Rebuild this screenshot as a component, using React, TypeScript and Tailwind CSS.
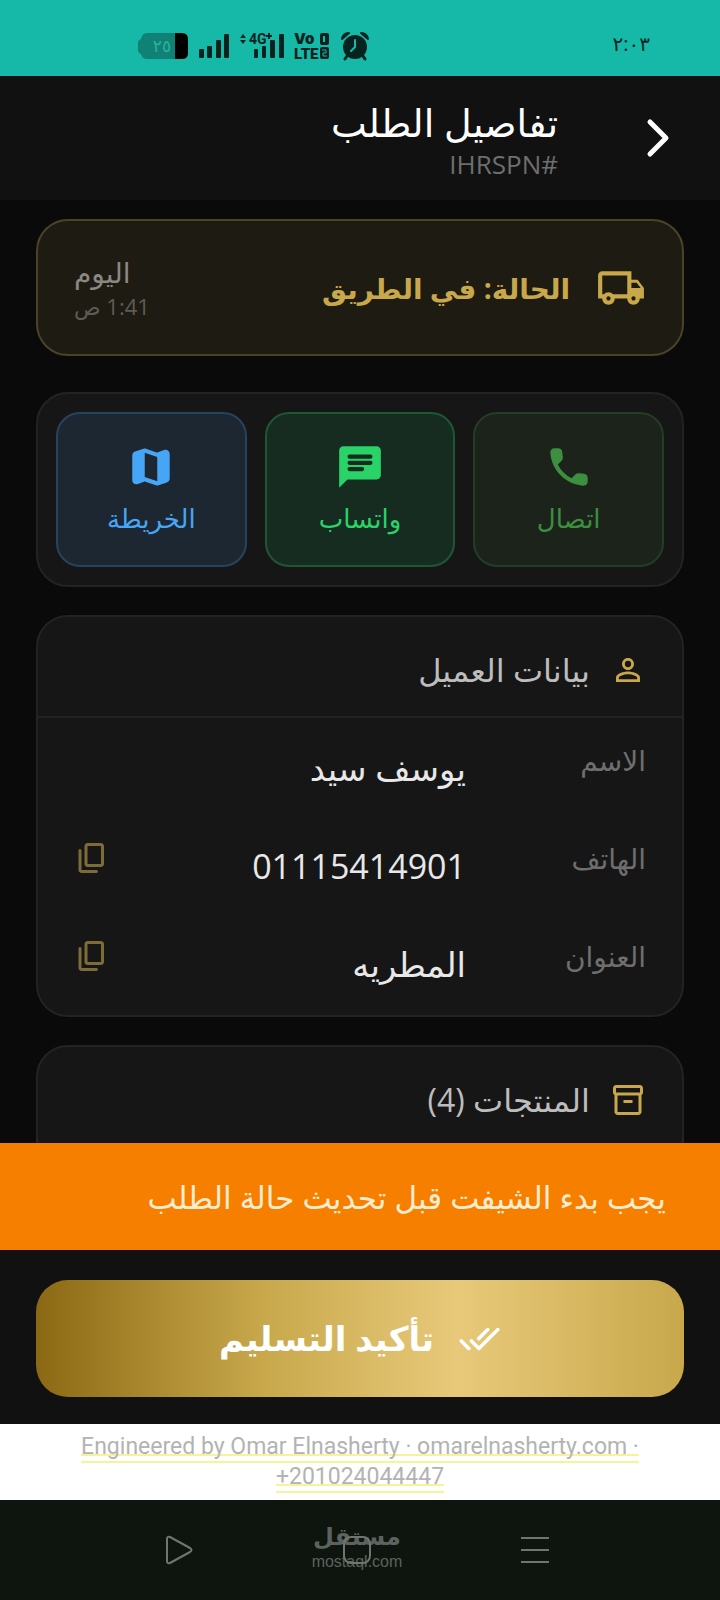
import type { ReactNode } from "react";
import { MdOutlineInventory2, MdOutlineLocalShipping, MdPersonOutline } from "react-icons/md";

const ROWS: Array<{ label: string; value: string; copyable: boolean }> = [
  { label: "الاسم", value: "يوسف سيد", copyable: false },
  { label: "الهاتف", value: "01115414901", copyable: true },
  { label: "العنوان", value: "المطريه", copyable: true },
];

const ACTIONS: Array<{ label: string; className: string; path: string }> = [
  {
    label: "اتصال",
    className: "border-[#243d25] bg-[#1b231b] text-[#3b8f3f]",
    path: "M19.23 15.26l-2.54-.29a1.99 1.99 0 0 0-1.64.57l-1.84 1.84a15.045 15.045 0 0 1-6.59-6.59l1.85-1.85c.43-.43.64-1.03.57-1.64l-.29-2.52a2.001 2.001 0 0 0-1.99-1.77H5.03c-1.13 0-2.07.94-2 2.07.53 8.54 7.36 15.36 15.89 15.89 1.13.07 2.07-.87 2.07-2v-1.73c.01-1.01-.75-1.86-1.76-1.98z",
  },
  {
    label: "واتساب",
    className: "border-[#1f5733] bg-[#172c20] text-[#29d368]",
    path: "M20 2H4c-1.1 0-1.99.9-1.99 2L2 22l4-4h14c1.1 0 2-.9 2-2V4c0-1.1-.9-2-2-2zM7 9h10c.55 0 1 .45 1 1s-.45 1-1 1H7c-.55 0-1-.45-1-1s.45-1 1-1zm6 5H7c-.55 0-1-.45-1-1s.45-1 1-1h6c.55 0 1 .45 1 1s-.45 1-1 1zm4-6H7c-.55 0-1-.45-1-1s.45-1 1-1h10c.55 0 1 .45 1 1s-.45 1-1 1z",
  },
  {
    label: "الخريطة",
    className: "border-[#26435f] bg-[#1c2731] text-[#47a5f5]",
    path: "M14.65 4.98l-5-1.75c-.42-.15-.88-.15-1.3-.01L4.36 4.56C3.55 4.84 3 5.6 3 6.46v11.85c0 1.41 1.41 2.37 2.72 1.86l2.93-1.14c.22-.09.47-.09.69-.01l5 1.75c.42.15.88.15 1.3.01l3.99-1.34c.81-.27 1.36-1.04 1.36-1.9V5.69c0-1.41-1.41-2.37-2.72-1.86l-2.93 1.14c-.22.08-.46.09-.69.01zM15 18.89l-6-2.11V5.11l6 2.11v11.67z",
  },
];

function StatusBar() {
  return (
    <div dir="ltr" className="flex h-[76px] shrink-0 items-end justify-between bg-[#16b9a8] pr-[70px] pb-3 pl-[138px] text-[#06231f]">
      <div className="flex items-center gap-2.5">
        <svg width="51" height="28" viewBox="0 0 51 28">
          <path d="M9 1h29v26H9q-5 0-6-5-3-1-3-4v-7q0-3 3-4 1-6 6-6z" fill="#108275" />
          <path d="M37 1h7q6 0 6 6v14q0 6-6 6h-7z" fill="#000" />
          <text x="24" y="20" textAnchor="middle" fontSize="17" fontFamily="DejaVu Sans" fill="#2bb3a3">
            ٢٥
          </text>
        </svg>
        <svg width="31" height="28" viewBox="0 0 31 28" fill="currentColor">
          <rect x="0" y="17" width="5" height="9" rx="1" />
          <rect x="8" y="14" width="5" height="12" rx="1" />
          <rect x="17" y="8" width="5" height="18" rx="1" />
          <rect x="25" y="2" width="5" height="24" rx="1" />
        </svg>
        <svg width="44" height="36" viewBox="0 -4 44 36" fill="currentColor">
          <path d="M0 6l3-4 3 4zM0 8h6l-3 4z" />
          <text x="9" y="12" fontSize="14" fontWeight="700" fontFamily="Roboto">
            4G
          </text>
          <path d="M28 1h2v2h2v2h-2v2h-2V5h-2V3h2z" />
          <rect x="14" y="17" width="4" height="9" rx="1" />
          <rect x="22" y="14" width="4" height="12" rx="1" />
          <rect x="30" y="8" width="5" height="18" rx="1" />
          <rect x="39" y="2" width="5" height="24" rx="1" />
        </svg>
        <svg width="36" height="36" viewBox="0 -4 36 36" fill="currentColor">
          <text x="0" y="12" fontSize="15" fontWeight="900" fontFamily="Inter">
            Vo
          </text>
          <text x="0" y="27" fontSize="15" fontWeight="900" fontFamily="Roboto">
            LTE
          </text>
          <rect x="26" y="1" width="9" height="12" rx="2" />
          <rect x="26" y="15" width="9" height="12" rx="2" />
          <path d="M30 4v6" stroke="#16b9a8" strokeWidth="2" />
          <path d="M28 18h4v3h-3v3h4" stroke="#16b9a8" strokeWidth="1" fill="none" />
        </svg>
        <svg width="30" height="30" viewBox="0 0 30 30" fill="currentColor">
          <circle cx="15" cy="16" r="12" />
          <path d="M2 8q1-6 7-6zM28 8q-1-6-7-6z" stroke="currentColor" strokeWidth="2" strokeLinejoin="round" />
          <path d="M7 25l-2 3M23 25l2 3" stroke="currentColor" strokeWidth="3" strokeLinecap="round" />
          <path d="M15 9v7l-4 4" stroke="#16b9a8" strokeWidth="2" fill="none" strokeLinecap="round" />
        </svg>
      </div>
      <span dir="rtl" className="text-xl leading-10">٢:٠٣</span>
    </div>
  );
}

function Card({ children }: { children: ReactNode }) {
  return <section className="rounded-[32px] border-2 border-[#232323] bg-[#161616]">{children}</section>;
}

function CardHeader({ icon, title }: { icon: ReactNode; title: string }) {
  return (
    <div className="flex h-[101px] items-center gap-5 border-b-2 border-[#232323] px-9 pt-1.5 text-[#c8a84b]">
      {icon}
      <h2 className="text-[32px] leading-10 text-[#bdbdbd]">{title}</h2>
    </div>
  );
}

function CopyIcon() {
  return (
    <svg width="36" height="36" viewBox="0 0 24 24" fill="currentColor">
      <path d="M9 18q-.825 0-1.412-.587T7 16V4q0-.825.588-1.412T9 2h9q.825 0 1.413.588T20 4v12q0 .825-.587 1.413T18 18zm0-2h9V4H9zm-4 6q-.825 0-1.412-.587T3 20V7q0-.425.288-.712T4 6t.713.288T5 7v13h10q.425 0 .713.288T16 21t-.288.713T15 22z" />
    </svg>
  );
}

function NavBar() {
  return (
    <nav dir="ltr" className="flex h-[100px] shrink-0 items-center justify-between bg-[#0d150e] pr-[170px] pl-[164px] text-[#6f756f]">
      <button aria-label="Back">
        <svg width="30" height="30" viewBox="0 0 30 30" fill="none" stroke="currentColor" strokeWidth="2" strokeLinejoin="round">
          <path d="M3 4q0-3 3-2l20 11q3 2 0 4L6 28q-3 1-3-2z" />
        </svg>
      </button>
      <div className="relative flex flex-col items-center pb-2 text-[#5c625d]">
        <span className="text-2xl leading-8 font-bold">مستقل</span>
        <span className="font-['Liberation_Sans',sans-serif] text-base leading-5">mostaql.com</span>
        <button aria-label="Home" className="absolute top-4 left-1/2 size-7 -translate-x-1/2 rounded-lg border-2 border-[#6f756f]" />
      </div>
      <button aria-label="Menu">
        <svg width="30" height="30" viewBox="0 0 30 30" fill="none" stroke="currentColor" strokeWidth="2">
          <path d="M1 3h28M1 15h28M1 27h28" />
        </svg>
      </button>
    </nav>
  );
}

export default function App() {
  return (
    <div dir="rtl" lang="ar" className="flex h-screen flex-col bg-[#0a0a0a] font-['Open_Sans','DejaVu_Sans',sans-serif]">
      <StatusBar />

      <header className="flex h-[124px] shrink-0 items-center gap-[84px] bg-[#111111] px-[46px]">
        <button aria-label="رجوع" className="text-white">
          <svg width="32" height="48" viewBox="0 0 32 48" fill="none" stroke="currentColor" strokeWidth="5" strokeLinecap="round" strokeLinejoin="round">
            <path d="M8 8l16 16L8 40" />
          </svg>
        </button>
        <div>
          <h1 className="text-[38px] leading-[52px] text-white">تفاصيل الطلب</h1>
          <p className="text-[26px] leading-8 text-[#6e6e6e]">#IHRSPN</p>
        </div>
      </header>

      <main className="min-h-0 flex-1 overflow-hidden px-9 pt-[19px]">
        <section className="flex h-[137px] items-center rounded-[32px] border-2 border-[#4b4228] bg-[#1e1b13] px-9 text-[#c8a84b]">
          <MdOutlineLocalShipping size={50} />
          <h2 className="mr-[26px] flex-1 text-[28px] leading-10 font-bold">الحالة: في الطريق</h2>
          <div className="text-left">
            <p className="text-[28px] leading-9 text-[#8a8881]">اليوم</p>
            <p className="text-[22px] leading-8 text-[#5d5b55]">1:41 ص</p>
          </div>
        </section>

        <div className="mt-9">
          <Card>
            <div className="grid grid-cols-3 gap-[18px] p-[18px]">
              {ACTIONS.map((a) => (
                <button
                  key={a.label}
                  className={`flex h-[155px] flex-col items-center justify-center gap-1.5 rounded-3xl border-2 ${a.className}`}
                >
                  <svg width="50" height="50" viewBox="0 0 24 24" fill="currentColor">
                    <path d={a.path} />
                  </svg>
                  <span className="text-[26px] leading-10">{a.label}</span>
                </button>
              ))}
            </div>
          </Card>
        </div>

        <div className="mt-7 flex flex-col gap-7">
          <Card>
            <CardHeader icon={<MdPersonOutline size={36} />} title="بيانات العميل" />
            <dl className="pb-[3px]">
              {ROWS.map((r) => (
                <div key={r.label} className="flex h-[98px] items-start px-9 pt-6">
                  <dt className="w-[180px] text-[28px] leading-9 text-[#6e6e6e]">{r.label}</dt>
                  <dd className="flex flex-1 items-start justify-between text-[34px] leading-[52px] text-[#e8e8e8]">
                    {r.value}
                    {r.copyable && (
                      <button aria-label={`نسخ ${r.label}`} className="text-[#7d6c38]">
                        <CopyIcon />
                      </button>
                    )}
                  </dd>
                </div>
              ))}
            </dl>
          </Card>
          <Card>
            <CardHeader icon={<MdOutlineInventory2 size={36} />} title="المنتجات (4)" />
            <div className="h-24" />
          </Card>
        </div>
      </main>

      <div role="alert" className="flex h-[107px] shrink-0 items-center bg-[#f77f00] px-[54px] text-[31px] leading-10 text-[#ffedd0]">
        يجب بدء الشيفت قبل تحديث حالة الطلب
      </div>

      <div className="shrink-0 bg-[#111111] px-9 pt-[30px] pb-[27px]">
        <button className="flex h-[117px] w-full items-center justify-center gap-6 rounded-[32px] bg-[linear-gradient(to_right,#8b6914,#c8a84b_35%,#e8c97a_65%,#c8a84b)] text-[34px] font-bold text-white">
          <svg width="43" height="43" viewBox="0 0 24 24" fill="currentColor">
            <path d="M17.3 6.3a.9959.9959 0 0 0-1.41 0l-5.64 5.64 1.41 1.41L17.3 7.7c.38-.38.38-1.02 0-1.4zm4.24-.01l-9.88 9.88-3.48-3.47a.9959.9959 0 1 0-1.41 1.41l4.18 4.18c.39.39 1.02.39 1.41 0L22.95 7.71c.39-.39.39-1.02 0-1.41h-.01a.9749.9749 0 0 0-1.4-.01zM1.12 14.12L5.3 18.3c.39.39 1.02.39 1.41 0l.7-.7-4.88-4.9a.9959.9959 0 0 0-1.41 0c-.39.39-.39 1.03 0 1.42z" />
          </svg>
          تأكيد التسليم
        </button>
      </div>

      <footer dir="ltr" className="shrink-0 bg-white px-16 py-2 text-center font-['Roboto',sans-serif] text-[23px] leading-[30px] text-[#b3b3b3]">
        <span className="underline decoration-[#f4f49a] decoration-2 underline-offset-0 [text-decoration-skip-ink:none]">
          <span className="underline decoration-[#f4f49a] decoration-2 underline-offset-[7px] [text-decoration-skip-ink:none]">
            Engineered by Omar Elnasherty · omarelnasherty.com · +201024044447
          </span>
        </span>
      </footer>

      <NavBar />
    </div>
  );
}
